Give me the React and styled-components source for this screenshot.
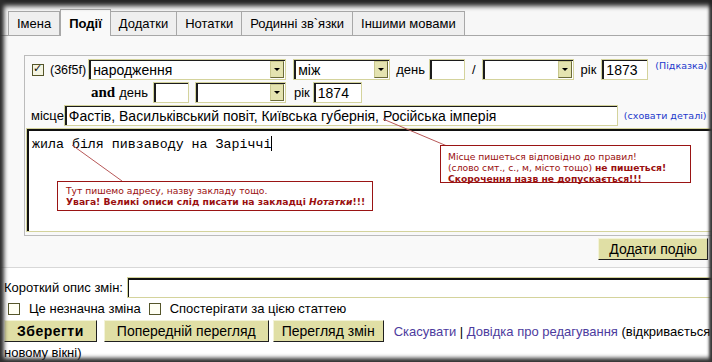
import React from "react";
import styled, { createGlobalStyle } from "styled-components";

const GlobalStyle = createGlobalStyle`
  html, body {
    margin: 0;
    padding: 0;
    background: #fff;
  }
  body {
    font-family: "Liberation Sans", Arial, sans-serif;
  }
`;

const Frame = styled.div`
  position: relative;
  width: 712px;
  height: 362px;
  overflow: hidden;
  background: #fff;
  font-size: 13px;
  color: #000;

  &::after {
    content: "";
    position: absolute;
    inset: 0;
    pointer-events: none;
    box-shadow: inset 6px 0 4px -2px #2e2e2e, inset 0 8px 5px -2px #262626,
      inset -4px 0 3px -1px #3a3a3a, inset 0 -6px 4px -2px #333;
  }
`;

const TabBar = styled.div`
  display: flex;
  align-items: flex-end;
  height: 36px;
  box-sizing: border-box;
  padding-left: 8px;
  background: #f7f7f7;
  border-bottom: 1px solid #a8a8a8;
`;

const Tab = styled.div`
  box-sizing: border-box;
  padding: 0 8px;
  display: flex;
  align-items: center;
  background: ${(p) => (p.$active ? "#f9f9f9" : "#efefef")};
  border: 1px solid #a8a8a8;
  border-left: ${(p) => (p.$first || p.$active ? "1px solid #a8a8a8" : "none")};
  border-bottom: none;
  margin-bottom: ${(p) => (p.$active ? "-1px" : "0")};
  height: ${(p) => (p.$active ? 27 : 24)}px;
  font-weight: ${(p) => (p.$active ? 700 : 400)};
  font-size: 13px;
  white-space: nowrap;
`;

const Pane = styled.div`
  height: 232px;
  box-sizing: border-box;
  padding: 19px 0 0 24px;
  background: #f9f9f9;
  border-bottom: 1px solid #d8d8d8;
`;

const EventBox = styled.div`
  width: 690px;
  box-sizing: border-box;
  border: 1px solid #bcbcbc;
  padding: 2px 0 3px 0;
  background: #f9f9f9;
`;

const Row = styled.div`
  display: flex;
  align-items: center;
  height: 23px;
  padding-left: ${(p) => p.$indent || 0}px;
`;

const Label = styled.span`
  margin-left: ${(p) => p.$ml || 0}px;
  font-size: ${(p) => p.$size || 13}px;
  white-space: nowrap;
`;

const AndWord = styled.span`
  font-family: "Liberation Serif", "Times New Roman", serif;
  font-weight: 700;
  font-size: 15px;
  margin-right: 4px;
`;

const Hint = styled.a`
  margin-left: ${(p) => p.$ml || 0}px;
  align-self: ${(p) => (p.$top ? "flex-start" : "center")};
  margin-top: ${(p) => (p.$top ? 2 : 0)}px;
  font-family: "DejaVu Sans", Verdana, sans-serif;
  font-size: 9.5px;
  color: #2238cc;
  text-decoration: none;
  white-space: nowrap;
`;

const Field = styled.div`
  position: relative;
  width: ${(p) => p.$w}px;
  height: 21px;
  margin-left: ${(p) => p.$ml || 0}px;
  box-sizing: border-box;
  background: #fff;
  border: 1px solid #d4d39c;
  box-shadow: inset 2px 1px 0 #1c1c1c;
  padding: 0 0 0 4px;
  display: flex;
  align-items: center;
  font-size: 14px;
  white-space: nowrap;
  overflow: hidden;
`;

const DropButton = styled.span`
  position: absolute;
  right: 1px;
  top: 1px;
  width: 14px;
  height: 17px;
  box-sizing: border-box;
  background: #e4e3b0;
  border: 1px solid #c9c88e;
  border-right-color: #6b6b3a;
  border-bottom-color: #6b6b3a;

  &::after {
    content: "";
    position: absolute;
    left: 3px;
    top: 6px;
    border-left: 3px solid transparent;
    border-right: 3px solid transparent;
    border-top: 3px solid #000;
  }
`;

const Check = styled.span`
  display: inline-block;
  position: relative;
  width: 12px;
  height: 12px;
  box-sizing: border-box;
  margin-left: ${(p) => p.$ml || 0}px;
  background: ${(p) => (p.$checked ? "#f4f4e2" : "#fffff4")};
  border: 1px solid #55552a;
  flex-shrink: 0;

  &::after {
    content: "${(p) => (p.$checked ? "✓" : "")}";
    position: absolute;
    left: 0px;
    top: -3px;
    font-family: "DejaVu Sans", sans-serif;
    font-size: 11px;
    font-weight: 700;
    color: #111;
  }
`;

const TextArea = styled.div`
  margin: 1px 0 0 1px;
  height: 104px;
  box-sizing: border-box;
  background: #fff;
  border: 1px solid #d4d39c;
  border-right: none;
  box-shadow: inset 2px 2px 0 #111;
  padding: 7px 0 0 5px;
  font-family: "Liberation Mono", "Courier New", monospace;
  font-size: 13.3px;
  white-space: nowrap;
`;

const Caret = styled.span`
  display: inline-block;
  width: 1px;
  height: 15px;
  background: #000;
  vertical-align: -3px;
`;

const ButtonRow = styled.div`
  display: flex;
  justify-content: flex-end;
  padding-right: 4px;
  margin-top: 2px;
`;

const Button = styled.button`
  height: 22px;
  box-sizing: border-box;
  margin: 0 0 0 ${(p) => p.$ml || 0}px;
  padding: 0 ${(p) => p.$px || 9}px;
  background: #e0dfa5;
  border: 1px solid;
  border-color: #f3f3d8 #1f1f1f #1f1f1f #f3f3d8;
  font-family: "Liberation Sans", Arial, sans-serif;
  font-size: 14px;
  font-weight: ${(p) => (p.$bold ? 700 : 400)};
  letter-spacing: ${(p) => (p.$bold ? "0.5px" : "0")};
  color: #000;
  white-space: nowrap;
  cursor: pointer;
`;

const Bottom = styled.div`
  padding: 9px 0 0 4px;
  background: #fff;
`;

const Line = styled.div`
  display: flex;
  align-items: center;
  margin-top: ${(p) => p.$mt || 0}px;
  font-size: 13px;
  white-space: nowrap;
`;

const SummaryInput = styled.div`
  flex: 1;
  height: 21px;
  margin-left: 4px;
  box-sizing: border-box;
  background: #fff;
  border: 1px solid #d4d39c;
  border-right: none;
  box-shadow: inset 1px 2px 0 #111;
`;

const Link = styled.a`
  color: #4d3c9e;
  text-decoration: none;
`;

const Callout = styled.div`
  position: absolute;
  top: ${(p) => p.$top}px;
  left: ${(p) => p.$left}px;
  width: ${(p) => p.$w}px;
  height: ${(p) => p.$h}px;
  box-sizing: border-box;
  padding: ${(p) => p.$pad};
  background: #fff;
  border: 1px solid #9a1414;
  font-family: "DejaVu Sans", Verdana, sans-serif;
  font-size: 9.2px;
  line-height: 11px;
  color: #9a1010;
  white-space: nowrap;

  b {
    font-weight: 700;
  }
`;

const Leaders = styled.svg`
  position: absolute;
  inset: 0;
  pointer-events: none;
`;

function Select({ w, ml, children }) {
  return (
    <Field $w={w} $ml={ml}>
      {children}
      <DropButton />
    </Field>
  );
}

const tabs = ["Імена", "Події", "Додатки", "Нотатки", "Родинні зв`язки", "Іншими мовами"];

export default function App() {
  return (
    <Frame>
      <GlobalStyle />
      <TabBar>
        {tabs.map((t, i) => (
          <Tab key={t} $first={i === 0} $active={t === "Події"}>
            {t}
          </Tab>
        ))}
      </TabBar>

      <Pane>
        <EventBox>
          <Row $indent={7}>
            <Check $checked />
            <Label $ml={6} $size={12.5}>(36f5f)</Label>
            <Select w={198} ml={2}>народження</Select>
            <Select w={97} ml={7}>між</Select>
            <Label $ml={6}>день</Label>
            <Field $w={36} $ml={4} />
            <Label $ml={7}>/</Label>
            <Select w={92} ml={6} />
            <Label $ml={7}>рік</Label>
            <Field $w={47} $ml={5}>1873</Field>
            <Hint $ml={7} $top>(Підказка)</Hint>
          </Row>
          <Row $indent={66}>
            <AndWord>and</AndWord>
            <Label>день</Label>
            <Field $w={36} $ml={5} />
            <Select w={91} ml={6} />
            <Label $ml={8}>рік</Label>
            <Field $w={49} $ml={3}>1874</Field>
          </Row>
          <Row $indent={6}>
            <Label>місце</Label>
            <Field $w={554} $ml={0}>
              Фастів, Васильківський повіт, Київська губернія, Російська імперія
            </Field>
            <Hint $ml={6}>(сховати деталі)</Hint>
          </Row>
          <TextArea>
            жила біля пивзаводу на Заріччі
            <Caret />
          </TextArea>
        </EventBox>
        <ButtonRow>
          <Button $px={10}>Додати подію</Button>
        </ButtonRow>
      </Pane>

      <Bottom>
        <Line>
          Короткий опис змін:
          <SummaryInput />
        </Line>
        <Line $mt={3}>
          <Check $ml={4} />
          <Label $ml={9}>Це незначна зміна</Label>
          <Check $ml={8} />
          <Label $ml={9}>Спостерігати за цією статтею</Label>
        </Line>
        <Line $mt={4}>
          <Button $bold $px={12}>Зберегти</Button>
          <Button $ml={7} $px={12}>Попередній перегляд</Button>
          <Button $ml={4} $px={8}>Перегляд змін</Button>
          <Label $ml={10}>
            <Link>Скасувати</Link> | <Link>Довідка про редагування</Link> (відкривається в
          </Label>
        </Line>
        <Line $mt={3}>новому вікні)</Line>
      </Bottom>

      <Leaders width="712" height="362">
        <line x1="72" y1="145" x2="122" y2="181" stroke="#b85858" strokeWidth="1" />
        <line x1="383" y1="119" x2="447" y2="146" stroke="#b85858" strokeWidth="1" />
      </Leaders>

      <Callout $top={181} $left={57} $w={316} $h={30} $pad="3px 0 0 8px">
        Тут пишемо адресу, назву закладу тощо.
        <br />
        <b>
          Увага! Великі описи слід писати на закладці <i>Нотатки</i>!!!
        </b>
      </Callout>
      <Callout $top={145} $left={440} $w={251} $h={38} $pad="5px 0 0 7px">
        Місце пишеться відповідно до правил!
        <br />
        (слово смт., с., м, місто тощо) <b>не пишеться!</b>
        <br />
        <b>Скорочення назв не допускається!!!</b>
      </Callout>
    </Frame>
  );
}
